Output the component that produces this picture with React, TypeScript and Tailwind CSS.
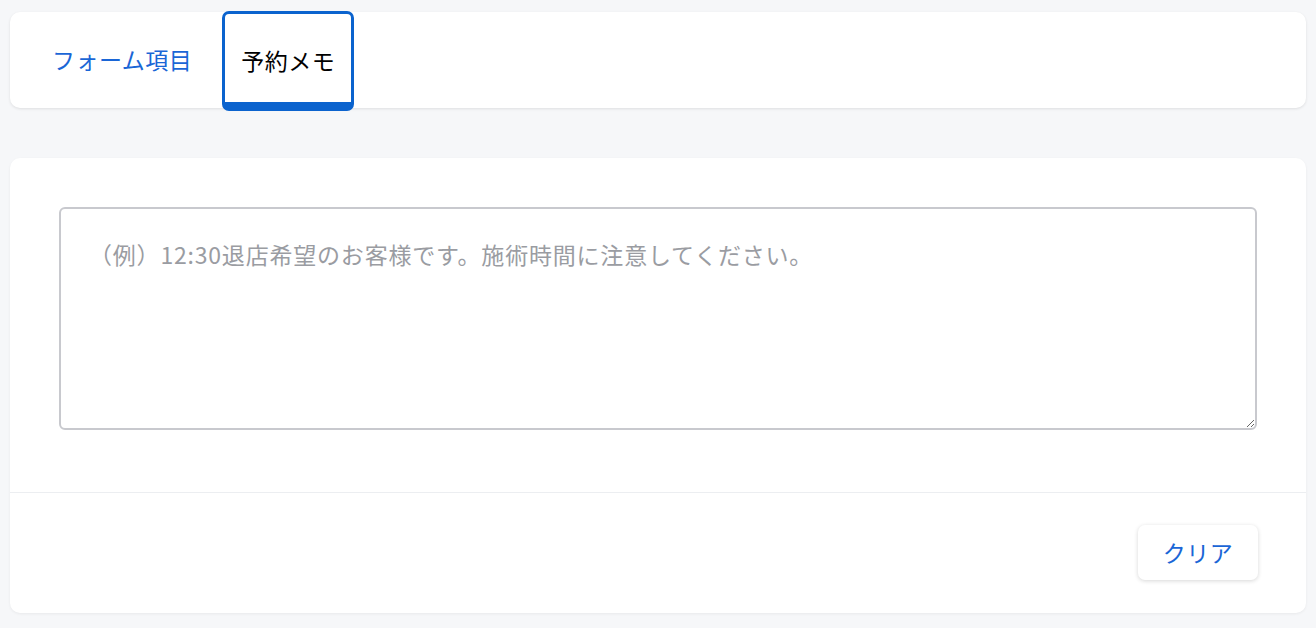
import { useState } from "react";

const font = {
    fontFamily: '"Noto Sans CJK JP", "Noto Sans", sans-serif',
};

function App() {
    const [memo, setMemo] = useState("");

    return (
        <div
            className="w-screen h-[628px] bg-[#f6f7f9] pt-[12px] overflow-hidden"
            style={font}
        >
            {/* tabs */}
            <div className="mx-[10px] h-[96px] bg-white rounded-[10px] shadow-[0_1px_3px_rgba(0,0,0,0.10)] flex pl-[42px]">
                <button className="self-center mt-[-2px] text-[23px] text-[#1a66d6] tracking-[0.5px]">
                    フォーム項目
                </button>
                <button className="ml-[30px] mt-[-1px] h-[100px] w-[132px] border-[3px] border-b-[9px] border-[#0b63ce] rounded-[7px] bg-white flex items-center justify-center pt-[4px] text-[23px] text-black tracking-[0.5px]">
                    予約メモ
                </button>
            </div>

            {/* memo card */}
            <div className="mx-[10px] mt-[50px] h-[455px] bg-white rounded-[10px] shadow-[0_1px_3px_rgba(0,0,0,0.06)] flex flex-col">
                <div className="px-[49px] pt-[49px] pb-[62px] border-b border-[#eceef1]">
                    <textarea
                        value={memo}
                        onChange={(e) => setMemo(e.target.value)}
                        placeholder="（例）12:30退店希望のお客様です。施術時間に注意してください。"
                        className="block w-full h-[223px] border-2 border-[#c8c9ce] rounded-[6px] px-[28px] pt-[28px] text-[23px] leading-[34px] tracking-[0.8px] text-gray-800 placeholder:text-[#9a9ca2] outline-none"
                        style={font}
                    />
                </div>
                <div className="flex justify-end pr-[48px] pt-[32px]">
                    <button className="w-[120px] h-[55px] bg-white rounded-[7px] shadow-[0_1px_4px_rgba(0,0,0,0.16)] text-[23px] text-[#1a66d6] tracking-[0.5px]">
                        クリア
                    </button>
                </div>
            </div>
        </div>
    );
}

export default App;
